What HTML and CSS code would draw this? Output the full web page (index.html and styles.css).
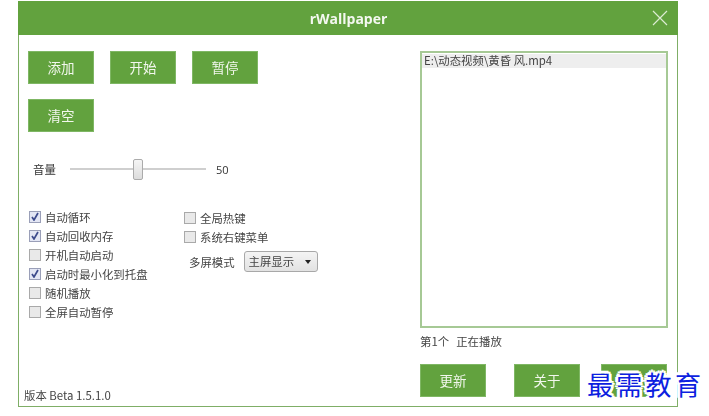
FILE: index.html
```html
<!DOCTYPE html>
<html lang="zh-CN">
<head>
<meta charset="utf-8">
<title>rWallpaper</title>
<link rel="stylesheet" href="styles.css">
</head>
<body>
<div class="window">
  <header class="titlebar">
    <span class="title">rWallpaper</span>
    <svg class="close" width="16" height="16" viewBox="0 0 16 16"><path d="M1 1L15 15M15 1L1 15" stroke="#dcebd2" stroke-width="1.2" fill="none"/></svg>
  </header>
  <div class="content">
    <section class="left">
      <div class="buttons">
        <button class="btn">添加</button>
        <button class="btn">开始</button>
        <button class="btn">暂停</button>
        <button class="btn">清空</button>
      </div>
      <div class="volume">
        <span class="vol-label">音量</span>
        <div class="slider"><span class="thumb"></span></div>
        <span class="vol-value">50</span>
      </div>
      <div class="options">
        <div class="col col-a">
          <label class="check"><span class="box on"><svg width="8" height="9" viewBox="0 0 8 9"><path d="M1 5L3 8L7 1" stroke="#3c4a8c" stroke-width="1.7" fill="none"/></svg></span>自动循环</label>
          <label class="check"><span class="box on"><svg width="8" height="9" viewBox="0 0 8 9"><path d="M1 5L3 8L7 1" stroke="#3c4a8c" stroke-width="1.7" fill="none"/></svg></span>自动回收内存</label>
          <label class="check"><span class="box"></span>开机自动启动</label>
          <label class="check"><span class="box on"><svg width="8" height="9" viewBox="0 0 8 9"><path d="M1 5L3 8L7 1" stroke="#3c4a8c" stroke-width="1.7" fill="none"/></svg></span>启动时最小化到托盘</label>
          <label class="check"><span class="box"></span>随机播放</label>
          <label class="check"><span class="box"></span>全屏自动暂停</label>
        </div>
        <div class="col col-b">
          <label class="check"><span class="box"></span>全局热键</label>
          <label class="check"><span class="box"></span>系统右键菜单</label>
          <div class="mode">
            <span>多屏模式</span>
            <div class="select">主屏显示<span class="arrow"></span></div>
          </div>
        </div>
      </div>
      <div class="version">版本 Beta 1.5.1.0</div>
    </section>
    <section class="right">
      <div class="list"><div class="item">E:\动态视频\黄昏 风.mp4</div></div>
      <div class="status">第1个&nbsp; 正在播放</div>
      <div class="actions">
        <button class="btn">更新</button>
        <button class="btn">关于</button>
        <button class="btn">退出</button>
      </div>
    </section>
  </div>
</div>
<div class="watermark">最需教育</div>
</body>
</html>
```
FILE: styles.css
```css
* { box-sizing: border-box; }
html, body { margin: 0; height: 100%; background: #fff; overflow: hidden; }
body {
  position: relative;
  padding: 1px 31px 9px 18px;
  font-family: "Noto Sans CJK SC", "Liberation Sans", sans-serif;
  font-size: 11.4px;
  color: #444;
}
.window {
  height: 406px;
  display: flex;
  flex-direction: column;
  border: 1px solid #7fae66;
  border-top: 0;
  filter: blur(0.45px);
}
.titlebar {
  height: 34px;
  margin: 0 -1px;
  background: #62a23e;
  position: relative;
  display: flex;
  align-items: center;
  justify-content: center;
  flex: none;
}
.title {
  color: #f4f8f0;
  font: bold 14px "Open Sans", sans-serif;
  margin-left: 1px;
}
.close { position: absolute; right: 10px; top: 9px; }
.content { flex: 1; display: flex; min-height: 0; }
.left { width: 401px; padding: 16px 0 0 9px; position: relative; }
.buttons {
  display: grid;
  grid-template-columns: repeat(3, 66px);
  column-gap: 16px;
  row-gap: 15px;
}
.btn {
  width: 66px;
  height: 33px;
  padding: 0 0 2px;
  border: 1px solid #7fb764;
  background: #62a23e;
  color: #f2f7ed;
  font-family: inherit;
  font-size: 13.5px;
  border-radius: 0;
}
.volume {
  display: flex;
  align-items: center;
  height: 22px;
  margin-top: 26px;
  padding-left: 5px;
}
.vol-label { width: 37px; color: #333; }
.slider {
  width: 136px;
  height: 2px;
  background: #cfcfcf;
  position: relative;
}
.thumb {
  position: absolute;
  left: 63px;
  top: -9px;
  width: 10px;
  height: 21px;
  background: linear-gradient(#f5f5f5, #dcdcdc);
  border: 1px solid #ababab;
  border-radius: 2px;
}
.vol-value { margin-left: 10px; color: #333; font-family: "Open Sans", sans-serif; font-size: 11px; }
.options {
  display: flex;
  margin-top: 27px;
  padding-left: 1px;
}
.col-a { width: 155px; }
.col-b { flex: 1; padding-top: 1px; }
.check {
  display: flex;
  align-items: center;
  height: 19px;
  white-space: nowrap;
  color: #444;
}
.box {
  width: 12px;
  height: 12px;
  flex: none;
  margin-right: 4px;
  border: 1px solid #a9a9a9;
  background: #e9e9e9;
  display: flex;
  align-items: center;
  justify-content: center;
}
.box.on { background: #e3e6f4; border-color: #9a9fb8; }
.mode {
  display: flex;
  align-items: center;
  gap: 9px;
  margin-top: 5px;
  padding-left: 5px;
}
.select {
  width: 74px;
  height: 21px;
  border: 1px solid #a8a8a8;
  border-radius: 3px;
  background: linear-gradient(#f4f4f4, #e2e2e2);
  padding-left: 4px;
  line-height: 18px;
  position: relative;
}
.arrow {
  position: absolute;
  right: 6px;
  top: 8px;
  border: 3px solid transparent;
  border-top: 4px solid #222;
  border-bottom: 0;
}
.version {
  position: absolute;
  left: 5px;
  bottom: 3px;
  color: #444;
}
.right { flex: 1; padding: 16px 9px 0 0; display: flex; flex-direction: column; }
.list {
  height: 277px;
  border: 2px solid #a6c995;
  padding: 1px 0;
}
.item {
  height: 14px;
  line-height: 13px;
  padding-left: 2px;
  background: #eeeeee;
  color: #444;
}
.status { margin-top: 5px; color: #444; height: 16px; line-height: 16px; word-spacing: 1px; }
.actions {
  display: flex;
  gap: 28px;
  margin-top: 15px;
}
.actions .btn:nth-child(3) { margin-left: -7px; }
.watermark {
  position: absolute;
  left: 587px;
  top: 365px;
  color: #0d1fe0;
  font-size: 26px;
  letter-spacing: 3.3px;
  white-space: nowrap;
  font-family: "Noto Sans CJK SC", sans-serif;
  text-shadow: 3px 0 0 #fff, -3px 0 0 #fff, 0 3px 0 #fff, 0 -3px 0 #fff, 2px 2px 0 #fff, -2px -2px 0 #fff, 2px -2px 0 #fff, -2px 2px 0 #fff;
}
```
